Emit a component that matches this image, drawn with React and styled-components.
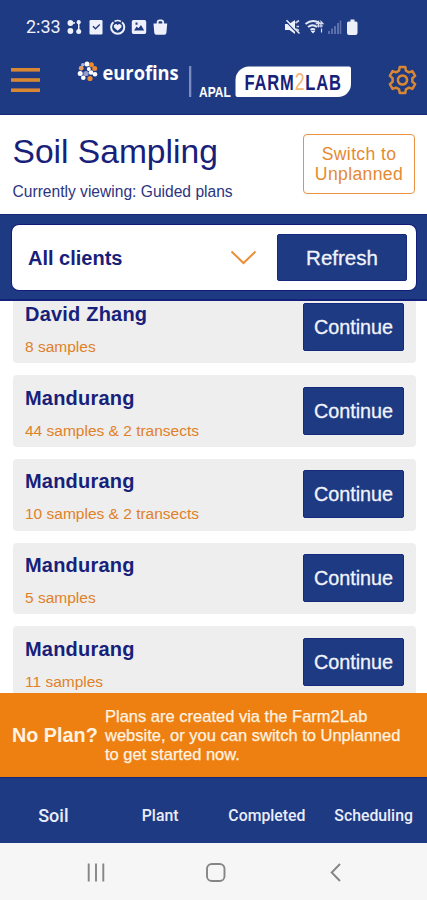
import React from "react";
import styled, { createGlobalStyle } from "styled-components";

const NAVY = "#1e3a82";
const INK = "#17217a";
const ORANGE = "#ee8012";
const SANS = '"Liberation Sans", Arial, sans-serif';

const GlobalStyle = createGlobalStyle`
  * { box-sizing: border-box; }
  body { margin: 0; background: #fff; font-family: ${SANS}; }
  svg { display: block; }
`;

const Screen = styled.div`
  display: flex;
  flex-direction: column;
  width: 427px;
  height: 900px;
  overflow: hidden;
  background: #fff;
  color: ${INK};
`;

const Header = styled.header`
  flex: none;
  height: 115px;
  background: ${NAVY};
  border-bottom: 1px solid #17297b;
`;

const StatusBar = styled.div`
  display: flex;
  align-items: center;
  justify-content: space-between;
  height: 54px;
  padding: 0 68px 0 26px;
`;

const StatusLeft = styled.div`
  display: flex;
  align-items: center;
  gap: 6px;
`;

const Clock = styled.span`
  font: 400 18px/20px Roboto, sans-serif;
  width: 35px;
  color: #eef1fb;
  white-space: nowrap;
`;

const AppBar = styled.div`
  display: flex;
  align-items: center;
  justify-content: space-between;
  height: 52px;
  padding: 0 10px 0 11px;
`;

const IconButton = styled.button`
  display: flex;
  padding: 0;
  border: 0;
  background: none;
`;

const TitleBar = styled.section`
  flex: none;
  display: flex;
  justify-content: space-between;
  height: 99px;
  padding: 19px 12px 0 12.5px;
`;

const Title = styled.h1`
  margin: 0;
  font-size: 33.6px;
  line-height: 36px;
  font-weight: 400;
`;

const Subtitle = styled.p`
  margin: 12px 0 0;
  font-size: 15.6px;
  line-height: 20px;
  color: #2b3480;
`;

const OutlineButton = styled.button`
  width: 112px;
  height: 60px;
  padding: 0;
  border: 1.4px solid #ea9242;
  border-radius: 4px;
  background: #fff;
  color: #e58a32;
  font: 400 17.6px/20px ${SANS};
  letter-spacing: 0.35px;
`;

const FilterBand = styled.section`
  flex: none;
  height: 87px;
  padding: 11px 11px 11px 12px;
  background: ${NAVY};
  border-top: 1px solid #17297b;
  border-bottom: 2px solid #14217a;
`;

const FilterCard = styled.div`
  display: flex;
  align-items: center;
  height: 65px;
  margin-top: -1px;
  padding: 0 9px 0 16px;
  border-radius: 7px;
  background: #fff;
  box-shadow: 0 0 0 1px #131d79;
`;

const FilterLabel = styled.span`
  flex: 1;
  font-size: 20px;
  line-height: 24px;
  font-weight: 700;
`;

const SolidButton = styled.button`
  flex: none;
  width: ${(p) => p.$width}px;
  height: ${(p) => p.$height}px;
  padding: 0;
  border: 1px solid #162a7d;
  border-radius: 2px;
  background: ${NAVY};
  color: #f1f3fb;
  font: 400 ${(p) => p.$size}px/24px ${SANS};
  -webkit-text-stroke: 0.3px #f1f3fb;
`;

const ChevronSlot = styled.span`
  margin-right: 20px;
`;

const PlanList = styled.main`
  flex: none;
  height: 392px;
  overflow: hidden;
  padding: 0 11px 0 12.5px;
`;

const PlanStack = styled.div`
  display: flex;
  flex-direction: column;
  gap: 12px;
  margin-top: -9.7px;
`;

const PlanCard = styled.article`
  flex: none;
  display: flex;
  justify-content: space-between;
  height: 71.75px;
  padding: 11.5px 12px 0 12.5px;
  border-radius: 4px;
  background: #eee;
`;

const PlanName = styled.h2`
  margin: -1px 0 0;
  font-size: 20px;
  line-height: 24px;
  font-weight: 700;
  letter-spacing: 0.2px;
`;

const PlanDetail = styled.p`
  margin: 11px 0 0;
  font-size: 15.5px;
  line-height: 20px;
  color: #e08128;
`;

const Banner = styled.aside`
  flex: none;
  display: flex;
  align-items: center;
  gap: 7px;
  height: 84px;
  padding-left: 12px;
  background: ${ORANGE};
  color: #fff3e2;
`;

const BannerTitle = styled.strong`
  width: 86px;
  font-size: 19.8px;
  white-space: nowrap;
`;

const BannerText = styled.p`
  width: 310px;
  margin: 0;
  font-size: 16.5px;
  line-height: 19px;
  -webkit-text-stroke: 0.25px #fff3e2;
`;

const Tabs = styled.nav`
  flex: none;
  display: grid;
  grid-template-columns: repeat(4, 1fr);
  align-items: center;
  height: 66px;
  padding-top: 11px;
  background: ${NAVY};
  border-top: 1px solid #17297b;
`;

const Tab = styled.a`
  text-align: center;
  color: #e9edf9;
  font: 500 ${(p) => (p.$active ? 18 : 15.8)}px/22px Roboto, sans-serif;
`;

const SystemBar = styled.footer`
  flex: none;
  display: flex;
  align-items: center;
  gap: 101px;
  height: 57px;
  padding: 1px 0 0 87px;
  background: #f6f6f6;
`;

const StatusIcons = () => (
  <svg width="102" height="18" viewBox="0 0 102 18" fill="#eef1fb">
    <circle cx="3.4" cy="5" r="2.9" />
    <circle cx="3.4" cy="13" r="2.9" />
    <circle cx="11.7" cy="4.2" r="2.1" />
    <circle cx="11.7" cy="13.4" r="2.5" />
    <path d="M11 4h1.5v9H11zM3 4.3h5v1.5H3z" />
    <rect x="22.5" y="2" width="13" height="14.5" rx="1.2" />
    <path d="M26 8.2l2.5 2.6 4.3-4.2" fill="none" stroke={NAVY} strokeWidth="1.4" />
    <path d="M55 4.2a6.6 6.6 0 1 1-8.6 0" fill="none" stroke="#eef1fb" strokeWidth="2" />
    <path d="M47.5 3.5a6.6 6.6 0 0 1 6.4 0" fill="none" stroke="#eef1fb" strokeWidth="1.5" />
    <path d="M50.7 12.8l-3.6-3.4a2 2 0 0 1 3.6-2.2 2 2 0 0 1 3.6 2.2z" />
    <path
      fillRule="evenodd"
      d="M66.5 2h11A1.7 1.7 0 0 1 79.2 3.7v10.6A1.7 1.7 0 0 1 77.5 16h-11a1.7 1.7 0 0 1-1.7-1.700V3.700A1.700 1.700 0 0 1 66.500 2zM67 12.500h10.200L74 7l-2.500 3.200-1.800-1.700zM68.500 4.500v2.200h2V4.500z"
    />
    <path d="M86.500 5.500h13.700l-.8 9.500a2 2 0 0 1-2 1.700h-8.100a2 2 0 0 1-2-1.700z" />
    <path d="M90.600 6.500V4a2 2 0 0 1 2-1.700h1.600a2 2 0 0 1 2 1.700v2.500" fill="none" stroke="#eef1fb" strokeWidth="1.800" />
  </svg>
);

const SignalIcons = () => (
  <svg width="74" height="18" viewBox="0 0 74 18" fill="#eef1fb">
    <path d="M0 6h4L10 2v14L4.500 12H0z" />
    <path d="M1.500 4.200L13 16" stroke={NAVY} strokeWidth="1.200" />
    <path d="M1.500 2.300L14.500 15.500" stroke="#eef1fb" strokeWidth="1.500" />
    <path d="M10.500 5l3.500-2.500M11.500 8.500H14M11 11l3 1.500" stroke="#cbd3ee" strokeWidth="1.700" />
    <g fill="none" stroke="#e3e8f7" strokeWidth="2">
      <path d="M20.500 6q7-5.500 14-.8M23 9q4.500-3.500 9 0M25.500 11.800q2.300-1.700 4.500 0" />
    </g>
    <path d="M28 15.500l-2.500-2.800h5z" />
    <path d="M33.500 9.500V3.500l-2 2.200h6.500l-2-2.200V9.500M32 8h6M36.500 10.500v4" fill="none" stroke="#d8def2" strokeWidth="1.200" />
    <g fill="#5b70ab">
      <rect x="43" y="13" width="2" height="3" />
      <rect x="46" y="10.500" width="2" height="5.500" />
      <rect x="49" y="8" width="2" height="8" />
      <rect x="52" y="5" width="2" height="11" />
      <rect x="54.700" y="2.500" width="1.600" height="13.500" />
    </g>
    <path d="M65.500 1.500h4v2h1.500a1.500 1.500 0 0 1 1.500 1.500v10a2 2 0 0 1-2 2h-6.500a2 2 0 0 1-2-2V5a1.500 1.500 0 0 1 1.500-1.500h2z" />
  </svg>
);

const MenuIcon = () => (
  <svg width="29" height="26" viewBox="0 0 29 26" fill="#d98733">
    <rect y="1" width="29" height="3.600" />
    <rect y="11.200" width="29" height="3.600" />
    <rect y="21.400" width="29" height="3.600" />
  </svg>
);

const LogoDots = () => (
  <g>
    <circle cx="6.800" cy="4.700" r="1.800" fill="#a9b6dc" />
    <circle cx="11" cy="4" r="2.500" fill="#fff" />
    <circle cx="15.400" cy="4.800" r="2.500" fill="#e88a35" />
    <circle cx="18.700" cy="8.600" r="2.500" fill="#e88a35" />
    <circle cx="5.200" cy="8.200" r="2.400" fill="#e6a168" />
    <circle cx="12.800" cy="9" r="2" fill="#fff" />
    <circle cx="4.200" cy="13.500" r="2.500" fill="#fff" />
    <circle cx="10" cy="13.500" r="2.600" fill="#9a9bd0" />
    <circle cx="15" cy="12.500" r="2.300" fill="#fff" />
    <circle cx="19" cy="14.300" r="2.300" fill="#fff" />
    <circle cx="7.300" cy="17.800" r="2.300" fill="#fff" />
    <circle cx="14" cy="18.500" r="2.600" fill="#e88a35" />
  </g>
);

const BrandLogo = () => (
  <svg width="276" height="42" viewBox="0 0 276 42">
    <g transform="translate(0 1)"><LogoDots /></g>
    <text transform="translate(26.500 20.500) scale(.915 1)" fill="#fff" fontFamily="Open Sans, sans-serif" fontSize="20" fontWeight="700">eurofins</text>
    <rect x="113" y="7" width="2.300" height="31" fill="#7c8cc0" />
    <text transform="translate(123 37.700) scale(.8 1)" fill="#fff" fontFamily="Liberation Sans, Arial, sans-serif" fontSize="15" fontWeight="700">APAL</text>
    <path d="M173.500 7.500H273a2 2 0 0 1 2 2V25a13 13 0 0 1-13 13H161.500a2 2 0 0 1-2-2V21A13.500 13.500 0 0 1 173.500 7.500z" fill="#fff" />
    <text transform="translate(168.500 31) scale(.735 1)" fill={INK} fontFamily="Liberation Sans, Arial, sans-serif" fontSize="22.500" fontWeight="700" letterSpacing="1.150">
      FARM<tspan fill="#f2b676" fontWeight="400" fontSize="24">2</tspan>LAB
    </text>
  </svg>
);

const GearIcon = () => (
  <svg width="29" height="30" viewBox="-14.500 -15 29 30" fill="none" stroke="#d98733" strokeWidth="2.500" strokeLinejoin="round">
    <path d="M-2.770-13H2.770L3.420-9.400 6.430-7.660 9.880-8.900 12.650-4.110 9.850-1.740V1.740L12.650 4.110 9.880 8.900 6.430 7.660 3.420 9.400 2.770 13H-2.770L-3.420 9.400-6.430 7.660-9.880 8.900-12.650 4.110-9.850 1.740V-1.740L-12.650-4.110-9.880-8.900-6.430-7.660-3.420-9.400z" />
    <circle r="4.600" />
  </svg>
);

const ChevronIcon = () => (
  <svg width="27" height="16" viewBox="0 0 27 16" fill="none" stroke="#e88f38" strokeWidth="2">
    <path d="M1.500 1.500l12 11.500L25.500 1.500" />
  </svg>
);

const RecentsIcon = () => (
  <svg width="18" height="19" viewBox="0 0 18 19" stroke="#858585" strokeWidth="1.900">
    <path d="M1.700.5v18M9 .5v18M16.300 .5v18" />
  </svg>
);

const HomeIcon = () => (
  <svg width="20" height="19" viewBox="0 0 20 19" fill="none" stroke="#858585" strokeWidth="1.900">
    <rect x="1" y="1" width="17.500" height="17" rx="4.800" />
  </svg>
);

const BackIcon = () => (
  <svg width="14" height="19" viewBox="0 0 14 19" fill="none" stroke="#858585" strokeWidth="1.900">
    <path d="M13 1L4.700 9.500 13 18" />
  </svg>
);

const plans = [
  { name: "David Zhang", detail: "8 samples" },
  { name: "Mandurang", detail: "44 samples & 2 transects" },
  { name: "Mandurang", detail: "10 samples & 2 transects" },
  { name: "Mandurang", detail: "5 samples" },
  { name: "Mandurang", detail: "11 samples" },
];

const tabs = ["Soil", "Plant", "Completed", "Scheduling"];

export default function App() {
  return (
    <Screen>
      <GlobalStyle />
      <Header>
        <StatusBar>
          <StatusLeft>
            <Clock>2:33</Clock>
            <StatusIcons />
          </StatusLeft>
          <SignalIcons />
        </StatusBar>
        <AppBar>
          <IconButton aria-label="Menu"><MenuIcon /></IconButton>
          <BrandLogo />
          <IconButton aria-label="Settings"><GearIcon /></IconButton>
        </AppBar>
      </Header>
      <TitleBar>
        <div>
          <Title>Soil Sampling</Title>
          <Subtitle>Currently viewing: Guided plans</Subtitle>
        </div>
        <OutlineButton>Switch to<br />Unplanned</OutlineButton>
      </TitleBar>
      <FilterBand>
        <FilterCard>
          <FilterLabel>All clients</FilterLabel>
          <ChevronSlot><ChevronIcon /></ChevronSlot>
          <SolidButton $width={130} $height={47} $size={20.5}>Refresh</SolidButton>
        </FilterCard>
      </FilterBand>
      <PlanList>
        <PlanStack>
          {plans.map((plan, i) => (
            <PlanCard key={i}>
              <div>
                <PlanName>{plan.name}</PlanName>
                <PlanDetail>{plan.detail}</PlanDetail>
              </div>
              <SolidButton $width={101} $height={48} $size={19.8}>Continue</SolidButton>
            </PlanCard>
          ))}
        </PlanStack>
      </PlanList>
      <Banner>
        <BannerTitle>No Plan?</BannerTitle>
        <BannerText>
          Plans are created via the Farm2Lab<br />
          website, or you can switch to Unplanned<br />
          to get started now.
        </BannerText>
      </Banner>
      <Tabs>
        {tabs.map((tab, i) => (
          <Tab key={tab} $active={i === 0}>{tab}</Tab>
        ))}
      </Tabs>
      <SystemBar>
        <RecentsIcon />
        <HomeIcon />
        <BackIcon />
      </SystemBar>
    </Screen>
  );
}
